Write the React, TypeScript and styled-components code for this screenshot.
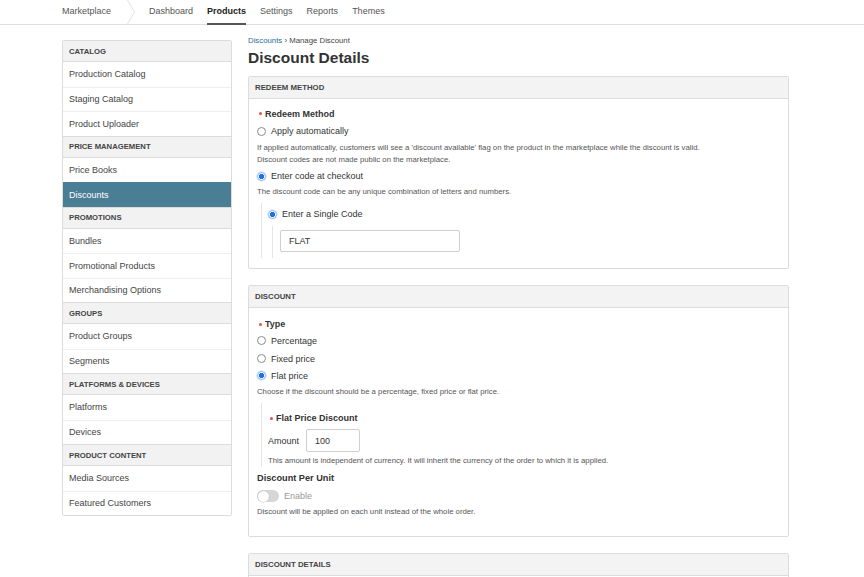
import React from "react";
import styled, { createGlobalStyle } from "styled-components";

const Global = createGlobalStyle`
  html, body { margin: 0; padding: 0; background: #fff; }
  body { font-family: "Liberation Sans", Arial, Helvetica, sans-serif; color: #333; }
  * { box-sizing: border-box; }
`;

const Page = styled.div`
  width: 864px;
  min-height: 577px;
  overflow: hidden;
`;

const TopNav = styled.nav`
  height: 25px;
  border-bottom: 1px solid #dedede;
  display: flex;
  align-items: stretch;
  padding-left: 62px;
  gap: 14px;
  font-size: 9px;
`;

const NavItem = styled.a<{ $active?: boolean }>`
  display: flex;
  align-items: center;
  color: ${(p) => (p.$active ? "#222" : "#555")};
  font-weight: ${(p) => (p.$active ? 700 : 400)};
  text-decoration: none;
  border-bottom: 2px solid ${(p) => (p.$active ? "#555" : "transparent")};
  padding-bottom: 1px;
  margin-bottom: -1px;
`;

const Brand = styled(NavItem)`
  margin-right: 2px;
`;

const Chevron = styled.svg`
  width: 8px;
  height: 24px;
  flex: none;
`;

const Body = styled.div`
  display: flex;
  align-items: flex-start;
  padding: 11px 0 0 62px;
  gap: 16px;
`;

const Sidebar = styled.aside`
  width: 170px;
  margin-top: 4px;
  border: 1px solid #dcdcdc;
  border-radius: 2px;
  font-size: 9px;
  flex: none;
`;

const SideHeader = styled.div`
  height: 22px;
  display: flex;
  align-items: center;
  padding-left: 6px;
  background: #f2f2f2;
  color: #444;
  font-weight: 700;
  font-size: 7.7px;
  border-top: 1px solid #dcdcdc;
  border-bottom: 1px solid #dcdcdc;
  &:first-child { border-top: none; height: 21px; }
`;

const SideItem = styled.div<{ $active?: boolean }>`
  height: 24.5px;
  display: flex;
  align-items: center;
  padding-left: 6px;
  color: ${(p) => (p.$active ? "#fff" : "#444")};
  background: ${(p) => (p.$active ? "#4a7e95" : "#fff")};
  border-top: 1px solid ${(p) => (p.$active ? "#4a7e95" : "#eee")};
  ${SideHeader} + & { border-top: none; }
`;

const Main = styled.main`
  width: 541px;
  flex: none;
`;

const Crumbs = styled.div`
  font-size: 7.8px;
  line-height: 9px;
  color: #444;
`;

const CrumbLink = styled.a`
  color: #2b6e97;
  text-decoration: none;
`;

const Title = styled.h1`
  margin: 4px 0 9px;
  font-size: 15.5px;
  line-height: 18px;
  font-weight: 700;
  color: #333;
`;

const Panel = styled.section`
  border: 1px solid #dcdcdc;
  border-radius: 2px;
  margin-bottom: 16px;
`;

const PanelHeader = styled.div`
  height: 22px;
  display: flex;
  align-items: center;
  padding-left: 6px;
  background: #f3f3f3;
  border-bottom: 1px solid #dcdcdc;
  font-size: 7.8px;
  font-weight: 700;
  color: #444;
`;

const PanelBody = styled.div<{ $top?: number; $bottom?: number }>`
  padding: ${(p) => p.$top ?? 8}px 8px ${(p) => p.$bottom ?? 12}px 8px;
`;

const FieldLabel = styled.div<{ $size?: number; $mt?: number }>`
  display: flex;
  align-items: center;
  height: 14px;
  margin-top: ${(p) => p.$mt ?? 0}px;
  font-size: ${(p) => p.$size ?? 9}px;
  font-weight: 700;
  color: #333;
`;

const Req = styled.span`
  width: 3px;
  height: 3px;
  border-radius: 50%;
  background: #d9534f;
  margin: 0 3px 0 2px;
  flex: none;
`;

const RadioRow = styled.label<{ $mt?: number }>`
  display: flex;
  align-items: center;
  height: 17px;
  margin-top: ${(p) => p.$mt ?? 0}px;
  font-size: 9px;
  color: #333;
  gap: 5px;
`;

const RadioDot = styled.span<{ $checked?: boolean }>`
  width: 9px;
  height: 9px;
  border-radius: 50%;
  flex: none;
  border: 1px solid ${(p) => (p.$checked ? "#8db4ee" : "#8a8a8a")};
  background: ${(p) =>
    p.$checked
      ? "radial-gradient(circle, #1f6fe5 0 2.4px, #fff 2.9px)"
      : "#fff"};
  box-shadow: ${(p) => (p.$checked ? "0 0 0 0.5px #bcd4f5" : "none")};
`;

const Help = styled.div<{ $mt?: number }>`
  font-size: 7.75px;
  line-height: 12px;
  color: #555;
  margin-top: ${(p) => p.$mt ?? 0}px;
`;

const Nested = styled.div<{ $ml?: number; $mt?: number; $pt?: number; $pb?: number; $pl?: number }>`
  border-left: 1px solid #e6e6e6;
  margin-left: ${(p) => p.$ml ?? 4}px;
  margin-top: ${(p) => p.$mt ?? 0}px;
  padding: ${(p) => p.$pt ?? 0}px 0 ${(p) => p.$pb ?? 0}px ${(p) => p.$pl ?? 7}px;
`;

const TextInput = styled.input<{ $w: number; $h?: number }>`
  display: block;
  width: ${(p) => p.$w}px;
  height: ${(p) => p.$h ?? 22}px;
  border: 1px solid #cfcfcf;
  border-radius: 2px;
  padding: 0 8px;
  font-family: inherit;
  font-size: 9px;
  color: #333;
  background: #fff;
  outline: none;
`;

const AmountRow = styled.div`
  display: flex;
  align-items: center;
  gap: 7px;
  margin-top: 4px;
  font-size: 9px;
  color: #333;
`;

const ToggleRow = styled.div`
  display: flex;
  align-items: center;
  gap: 5px;
  height: 14px;
  margin-top: 4px;
  font-size: 9px;
  color: #999;
`;

const Toggle = styled.span`
  position: relative;
  width: 22px;
  height: 12px;
  border-radius: 6px;
  background: #d6d6d6;
  flex: none;
  &::after {
    content: "";
    position: absolute;
    left: 0.5px;
    top: 0.5px;
    width: 11px;
    height: 11px;
    border-radius: 50%;
    background: #fff;
    box-shadow: 0 0 0 0.5px #bbb;
  }
`;

const sideGroups: { title: string; items: string[] }[] = [
  { title: "CATALOG", items: ["Production Catalog", "Staging Catalog", "Product Uploader"] },
  { title: "PRICE MANAGEMENT", items: ["Price Books", "Discounts"] },
  { title: "PROMOTIONS", items: ["Bundles", "Promotional Products", "Merchandising Options"] },
  { title: "GROUPS", items: ["Product Groups", "Segments"] },
  { title: "PLATFORMS & DEVICES", items: ["Platforms", "Devices"] },
  { title: "PRODUCT CONTENT", items: ["Media Sources", "Featured Customers"] },
];

export default function App() {
  return (
    <Page>
      <Global />
      <TopNav>
        <Brand>Marketplace</Brand>
        <Chevron viewBox="0 0 8 24">
          <polyline points="0.5,0 7.5,12 0.5,24" fill="none" stroke="#e2e2e2" strokeWidth="1" />
        </Chevron>
        <NavItem>Dashboard</NavItem>
        <NavItem $active>Products</NavItem>
        <NavItem>Settings</NavItem>
        <NavItem>Reports</NavItem>
        <NavItem>Themes</NavItem>
      </TopNav>
      <Body>
        <Sidebar>
          {sideGroups.map((g) => (
            <React.Fragment key={g.title}>
              <SideHeader>{g.title}</SideHeader>
              {g.items.map((it) => (
                <SideItem key={it} $active={it === "Discounts"}>
                  {it}
                </SideItem>
              ))}
            </React.Fragment>
          ))}
        </Sidebar>
        <Main>
          <Crumbs>
            <CrumbLink>Discounts</CrumbLink> › Manage Discount
          </Crumbs>
          <Title>Discount Details</Title>

          <Panel>
            <PanelHeader>REDEEM METHOD</PanelHeader>
            <PanelBody $top={7.5} $bottom={10}>
              <FieldLabel>
                <Req />
                Redeem Method
              </FieldLabel>
              <RadioRow $mt={2}>
                <RadioDot />
                Apply automatically
              </RadioRow>
              <Help $mt={2}>
                If applied automatically, customers will see a 'discount available' flag on the product in the marketplace while the discount is valid.
                <br />
                Discount codes are not made public on the marketplace.
              </Help>
              <RadioRow $mt={2}>
                <RadioDot $checked />
                Enter code at checkout
              </RadioRow>
              <Help $mt={1.5}>The discount code can be any unique combination of letters and numbers.</Help>
              <Nested $ml={4} $mt={5} $pt={2.5} $pl={6}>
                <RadioRow>
                  <RadioDot $checked />
                  Enter a Single Code
                </RadioRow>
                <Nested $ml={4} $mt={3.5} $pt={4} $pb={6} $pl={7}>
                  <TextInput $w={180} defaultValue="FLAT" readOnly />
                </Nested>
              </Nested>
            </PanelBody>
          </Panel>

          <Panel>
            <PanelHeader>DISCOUNT</PanelHeader>
            <PanelBody $top={9} $bottom={18}>
              <FieldLabel>
                <Req />
                Type
              </FieldLabel>
              <RadioRow $mt={1}>
                <RadioDot />
                Percentage
              </RadioRow>
              <RadioRow $mt={1}>
                <RadioDot />
                Fixed price
              </RadioRow>
              <RadioRow>
                <RadioDot $checked />
                Flat price
              </RadioRow>
              <Help $mt={2}>Choose if the discount should be a percentage, fixed price or flat price.</Help>
              <Nested $ml={4} $mt={5} $pt={8} $pl={6}>
                <FieldLabel>
                  <Req />
                  Flat Price Discount
                </FieldLabel>
                <AmountRow>
                  Amount
                  <TextInput $w={54} $h={23} defaultValue="100" readOnly />
                </AmountRow>
                <Help $mt={3}>This amount is independent of currency. It will inherit the currency of the order to which it is applied.</Help>
              </Nested>
              <FieldLabel $size={9.2} $mt={4}>Discount Per Unit</FieldLabel>
              <ToggleRow>
                <Toggle />
                Enable
              </ToggleRow>
              <Help $mt={3}>Discount will be applied on each unit instead of the whole order.</Help>
            </PanelBody>
          </Panel>

          <Panel>
            <PanelHeader>DISCOUNT DETAILS</PanelHeader>
            <PanelBody $bottom={40} />
          </Panel>
        </Main>
      </Body>
    </Page>
  );
}
